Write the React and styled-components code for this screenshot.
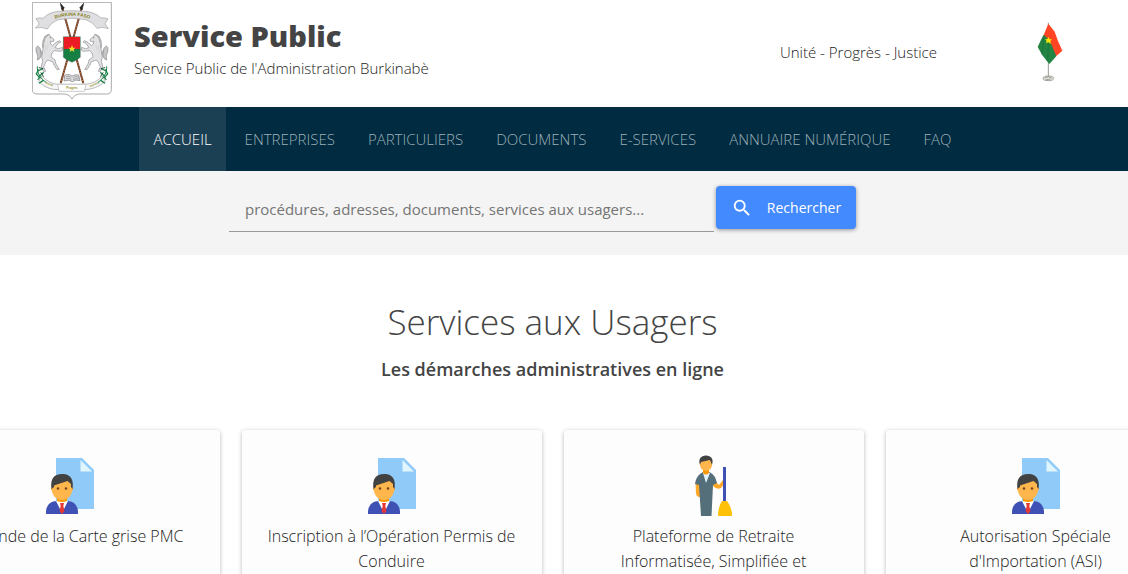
import React from 'react';
import styled, { createGlobalStyle } from 'styled-components';

const GlobalStyle = createGlobalStyle`
  *, *::before, *::after { box-sizing: border-box; }
  body {
    margin: 0;
    background: #fff;
    color: #444;
    font-family: "Segoe UI", "Open Sans", "Noto Sans", sans-serif;
  }
  h1, h2, h3, p, ul { margin: 0; padding: 0; }
`;

const Page = styled.div`
  height: 100vh;
  overflow: hidden;
`;

const Header = styled.header`
  display: flex;
  align-items: center;
  height: 107px;
  padding: 0 64px 3px 32px;
`;

const Brand = styled.a`
  display: flex;
  flex: 1;
  align-items: center;
  gap: 22px;
  padding-bottom: 3px;
  color: inherit;
  text-decoration: none;
`;

const BrandText = styled.div`
  display: flex;
  flex-direction: column;
  padding-bottom: 2px;
`;

const BrandName = styled.h1`
  font-size: 29px;
  line-height: 36px;
  font-weight: 800;
`;

const Tagline = styled.p`
  font-size: 15px;
  line-height: 28px;
  font-weight: 300;
  color: #222;
`;

const FlagSlot = styled.div`
  display: flex;
  margin-left: 100px;
`;

const Nav = styled.nav`
  background: #002b40;
  padding-right: 23px;
`;

const NavList = styled.ul`
  display: flex;
  justify-content: center;
  gap: 5px;
  list-style: none;
`;

const NavLink = styled.a`
  display: block;
  padding: 0 14px;
  font-size: 15px;
  font-weight: 300;
  line-height: 64px;
  white-space: nowrap;
  text-decoration: none;
  color: ${(p) => (p.$active ? '#fff' : '#9db0ba')};
  background: ${(p) => (p.$active ? '#1c4053' : 'transparent')};
`;

const SearchBar = styled.form`
  display: flex;
  justify-content: center;
  gap: 2px;
  height: 84px;
  padding: 15px 43px 0 0;
  background: #f4f4f4;
`;

const SearchInput = styled.input`
  flex: 0 1 485px;
  min-width: 0;
  height: 46px;
  padding: 0 16px;
  border: 0;
  border-bottom: 1px solid #999;
  background: transparent;
  font: 400 15px "Segoe UI", "Open Sans", sans-serif;
  color: #444;
  outline: none;
  &::placeholder { color: #757575; opacity: 1; }
`;

const SearchButton = styled.button`
  display: flex;
  align-items: center;
  justify-content: center;
  gap: 14px;
  width: 140px;
  height: 43px;
  padding: 0;
  border: 0;
  border-radius: 4px;
  background: #448aff;
  color: #fff;
  font: 500 14px "Segoe UI", "Open Sans", sans-serif;
  box-shadow: 0 1px 4px rgba(0, 0, 0, 0.4);
`;

const Services = styled.main`
  padding: 38px 23px 0 0;
  text-align: center;
`;

const Title = styled.h2`
  font-size: 35px;
  line-height: 58px;
  font-weight: 300;
`;

const Subtitle = styled.h3`
  font-size: 18px;
  line-height: 36px;
  font-weight: 600;
`;

const Cards = styled.div`
  display: flex;
  justify-content: center;
  gap: 22px;
  padding-top: 43px;
`;

const Card = styled.a`
  display: flex;
  flex: 0 0 300px;
  flex-direction: column;
  align-items: center;
  gap: 6px;
  height: 210px;
  padding: 24px 24px 0;
  border-radius: 3px;
  background: #fdfdfd;
  box-shadow: 0 1px 4px rgba(0, 0, 0, 0.28);
  color: #222;
  text-decoration: none;
`;

const CardIcon = styled.span`
  display: flex;
  align-items: center;
  justify-content: center;
  height: 64px;
`;

const CardLabel = styled.span`
  max-width: 256px;
  font-size: 16px;
  font-weight: 300;
  line-height: 25px;
`;

const Horse = () => (
  <g>
    <path
      d="M51 96 L54 103 L65 111 L66 117 L59 119 L55 117 L56 126 L62 131 L72 121 L83 116 L87 120 L78 124 L69 137 L80 140 L91 136 L93 144 L86 148 L67 146 L60 153 L57 164 L69 174 L72 187 L82 202 L75 203 L66 189 L62 179 L47 174 L41 181 L35 195 L41 208 L34 208 L28 192 L32 178 L29 163 L32 147 L35 125 L39 109 Z"
      fill="#e2e2e4" stroke="#8b8b90" strokeWidth="2"
    />
    <path d="M50 97 L39 104 L33 119 L32 137" fill="none" stroke="#aaa" strokeWidth="4" />
    <path d="M30 158 C24 128 12 126 12 144 C12 156 20 155 16 174 C31 168 27 157 25 145" fill="#c6c6c8" stroke="#85858a" strokeWidth="2" />
    <path d="M41 130 L39 156 M48 128 L46 145 M65 148 L54 167" stroke="#bbb" strokeWidth="1" />
    <circle cx="55" cy="107" r="1.5" fill="#555" />
  </g>
);

const Millet = () => (
  <g fill="none" strokeLinecap="round">
    <path d="M16 194 C15 212 24 229 42 241" stroke="#168044" strokeWidth="3" />
    <path d="M19 204 L13 216 L20 224 M19 206 L31 201 M23 221 L34 212 M24 225 L18 232 M33 236 L22 243" stroke="#168044" strokeWidth="4" />
    <path d="M22 197 L33 200 M27 212 L34 223" stroke="#274f3b" strokeWidth="3" />
  </g>
);

const CoatOfArms = () => (
  <svg width="80" height="98" viewBox="0 0 240 294" role="img" aria-label="Armoiries du Burkina Faso">
    <path d="M1 1 H238 V263 Q238 276 224 276 H140 Q126 278 120 291 Q114 278 100 276 H15 Q1 276 1 263 Z" fill="#fff" stroke="#aaa" strokeWidth="3" />
    {['M149 18 L86 244', 'M91 18 L154 244'].map((d) => (
      <g key={d}>
        <path d={d} stroke="#713b2b" strokeWidth="6" />
        <path d={d} stroke="#d7a54c" strokeWidth="2" strokeDasharray="4 4" />
      </g>
    ))}
    <path d="M155 4 L143 18 L150 24 Z M85 4 L97 18 L90 24 Z" fill="#222" stroke="#222" strokeWidth="2" />
    <path d="M10 78 L22 66 L12 50 Q22 46 33 49 Q52 30 80 28 Q120 24 160 28 Q190 31 207 48 Q217 46 228 51 L219 65 L229 80 Q212 72 195 79 Q184 60 162 53 Q120 44 80 53 Q58 60 46 81 Q28 73 10 78 Z" fill="#dfdfe2" stroke="#a0a0a5" strokeWidth="2" />
    <path id="ribbon-top" d="M66 51 Q120 32 176 51" fill="none" />
    <text fontFamily="Liberation Sans" fontSize="14" fontWeight="700" fill="#857d18" textAnchor="middle">
      <textPath href="#ribbon-top" startOffset="50%">BURKINA FASO</textPath>
    </text>
    <Horse />
    <g transform="translate(240 0) scale(-1 1)"><Horse /></g>
    <path d="M94 104 H145 V166 Q137 174 120 181 Q102 174 94 166 Z" fill="#168044" stroke="#555" strokeWidth="1" />
    <path d="M95 105 H144 V141 H95 Z" fill="#ed1c24" />
    <path d="M120 129 L123 137 H131 L125 142 L127 150 L120 145 L113 150 L115 142 L109 137 H117 Z" fill="#ffdf24" />
    <path d="M98 220 L103 218 Q114 216 120 222 Q129 216 140 219 L144 236 Q130 231 121 239 Q111 231 96 237 Z" fill="#ddd" stroke="#777" strokeWidth="2" />
    <path d="M102 224 Q112 221 118 227 M123 227 Q132 221 140 225 M101 230 Q112 227 118 233 M123 233 Q132 227 141 231" fill="none" stroke="#888" strokeWidth="2" />
    <path d="M29 222 Q53 247 82 247 L156 247 Q190 246 211 222 L220 238 Q192 263 156 263 H81 Q45 264 20 239 Z" fill="#f7f7f7" stroke="#999" strokeWidth="2" />
    <path d="M77 247 L81 268 H157 L162 247 Z" fill="#fff" stroke="#b4b4b4" strokeWidth="2" />
    <g fontFamily="Liberation Sans" fontSize="9" fontWeight="700" fill="#938d20" textAnchor="middle">
      <text x="51" y="249" transform="rotate(23 51 249)">Unité</text>
      <text x="120" y="260">Progrès</text>
      <text x="188" y="250" transform="rotate(-23 188 250)">Justice</text>
    </g>
    <Millet />
    <g transform="translate(240 0) scale(-1 1)"><Millet /></g>
  </svg>
);

const Flag = () => (
  <svg width="27" height="60" viewBox="0 0 81 180" role="img" aria-label="Drapeau du Burkina Faso">
    <path d="M34 2 V168" stroke="#999" strokeWidth="3" />
    <ellipse cx="34" cy="169" rx="16" ry="7" fill="#e3e3dd" stroke="#a4a99c" strokeWidth="3" />
    <path d="M23 168 Q34 160 45 169 M26 173 H40" fill="none" stroke="#78786f" strokeWidth="2" />
    <path d="M34 5 L53 29 L63 57 L76 86 L58 102 L33 80 L20 39 Z" fill="#ff4524" />
    <path d="M20 38 L38 55 L58 103 L37 126 L17 101 L2 75 L12 53 Z" fill="#238443" />
    <path d="M21 42 L15 98 M35 61 L32 117" stroke="#176d37" strokeWidth="4" opacity=".5" />
    <path d="M34 44 L38 52 L45 52 L40 58 L42 66 L34 61 L27 64 L29 57 L24 51 L31 52 Z" fill="#ffe600" />
  </svg>
);

const SearchIcon = () => (
  <svg width="22" height="22" viewBox="0 0 24 24" fill="currentColor" aria-hidden="true">
    <path d="M15.5 14h-.79l-.28-.27A6.47 6.47 0 0 0 16 9.5 6.5 6.5 0 1 0 9.5 16c1.61 0 3.09-.59 4.23-1.57l.27.28v.79l5 4.99L20.49 19zm-6 0C7.01 14 5 11.99 5 9.5S7.01 5 9.5 5 14 7.01 14 9.5 11.99 14 9.5 14" />
  </svg>
);

const DocumentUserIcon = () => (
  <svg width="48" height="56" viewBox="0 0 48 56" aria-hidden="true">
    <path d="M10 0 H36 L48 12 V51 H10 Z" fill="#90caf9" />
    <path d="M34.500 2 V13.500 H46 Z" fill="#e1f5fe" />
    <path d="M0 56 V54 C0 47 5 43 11 43 H21 C27 43 32 47 32 54 V56 Z" fill="#3f51b5" />
    <path d="M10 43 L16 55 L22 43 Z" fill="#fff" />
    <path d="M14 45 H18 L17.300 48 L18.500 53 L16 56 L13.500 53 L14.700 48 Z" fill="#e53935" />
    <path d="M11 38 H21 V43 Q16 45 11 43 Z" fill="#ff9800" />
    <circle cx="7" cy="31" r="2" fill="#ffa726" />
    <circle cx="25" cy="31" r="2" fill="#ffa726" />
    <path d="M6 26 Q6 20 16 20 Q26 20 26 26 V32 C26 38 21 42 16 42 C11 42 6 38 6 32 Z" fill="#ffb74d" />
    <path d="M5.500 31 C4 21 8 16 16 16 L18 16 C25 17 28 22 26.500 31 L25 29 V26 L21.500 23 L8 27.500 V29 Z" fill="#424242" />
    <circle cx="12" cy="30.500" r="1.300" fill="#784719" />
    <circle cx="20" cy="30.500" r="1.300" fill="#784719" />
  </svg>
);

const JanitorIcon = () => (
  <svg width="38" height="62" viewBox="0 0 38 62" aria-hidden="true">
    <path d="M0.500 28 L5 29 V42 Q1 42 1 38 Z" fill="#ffa726" />
    <path d="M18 29 L21 27 L24 30 L28 25 L30 28 L26 33 Q22 35 18 31 Z" fill="#ffa726" />
    <path d="M8 17 L5 19 Q1 22 0 29 L4 30 L6 61 H16.500 L18 30 L22 28 Q20 20 16 18 L14 17 Z" fill="#546e7a" />
    <path d="M8 18 L11 28 L15 18 Z" fill="#e1f5fe" />
    <path d="M8 13 H14 V18 Q11 21 8 18 Z" fill="#ff9800" />
    <path d="M5 6 Q11 0 17 6 V10 Q17 15 11 16 Q5 15 5 10 Z" fill="#ffb74d" />
    <path d="M5 10 C3 4 6 0.500 11 0.500 C16 0.500 19 4 17 10 L15 5 L6 7 Z" fill="#424242" />
    <path d="M28 12 H31 V47 H28 Z" fill="#3f51b5" />
    <path d="M27 46 H32 Q37 52 37 61 H23 Q23 52 27 46 Z" fill="#ffc107" />
  </svg>
);

const links = ['Accueil', 'Entreprises', 'Particuliers', 'Documents', 'E-Services', 'Annuaire numérique', 'FAQ'];

const services = [
  { label: 'Demande de la Carte grise PMC', Icon: DocumentUserIcon },
  { label: 'Inscription à l’Opération Permis de Conduire', Icon: DocumentUserIcon },
  { label: 'Plateforme de Retraite Informatisée, Simplifiée et', Icon: JanitorIcon },
  { label: "Autorisation Spéciale d'Importation (ASI)", Icon: DocumentUserIcon },
];

export default function App() {
  return (
    <Page>
      <GlobalStyle />
      <Header>
        <Brand href="#">
          <CoatOfArms />
          <BrandText>
            <BrandName>Service Public</BrandName>
            <Tagline>Service Public de l'Administration Burkinabè</Tagline>
          </BrandText>
        </Brand>
        <Tagline>Unité - Progrès - Justice</Tagline>
        <FlagSlot><Flag /></FlagSlot>
      </Header>
      <Nav aria-label="Navigation principale">
        <NavList>
          {links.map((link, i) => (
            <li key={link}>
              <NavLink href="#" $active={i === 0}>{link.toUpperCase()}</NavLink>
            </li>
          ))}
        </NavList>
      </Nav>
      <SearchBar role="search" onSubmit={(e) => e.preventDefault()}>
        <SearchInput
          type="text"
          aria-label="Rechercher"
          placeholder="procédures, adresses, documents, services aux usagers..."
        />
        <SearchButton type="submit"><SearchIcon />Rechercher</SearchButton>
      </SearchBar>
      <Services>
        <Title>Services aux Usagers</Title>
        <Subtitle>Les démarches administratives en ligne</Subtitle>
        <Cards>
          {services.map(({ label, Icon }) => (
            <Card href="#" key={label}>
              <CardIcon><Icon /></CardIcon>
              <CardLabel>{label}</CardLabel>
            </Card>
          ))}
        </Cards>
      </Services>
    </Page>
  );
}
